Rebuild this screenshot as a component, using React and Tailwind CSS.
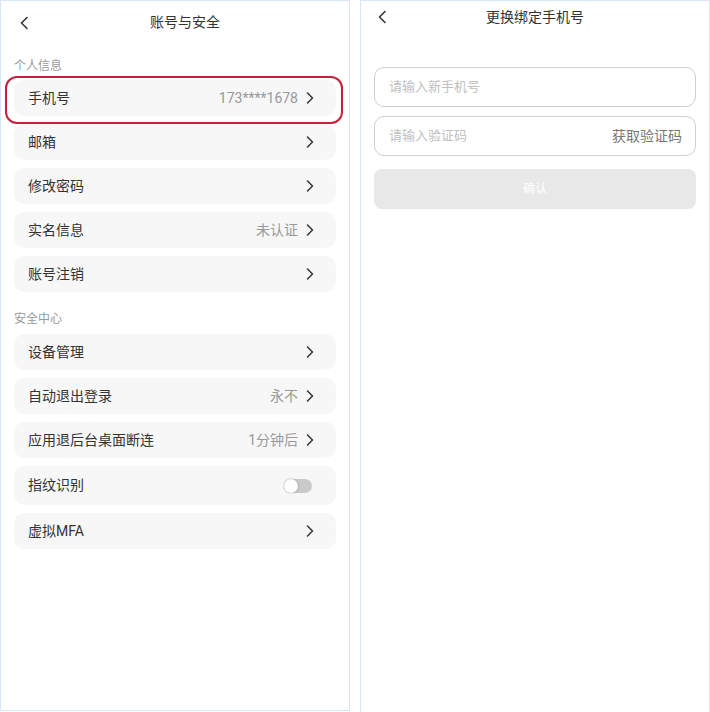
import React from 'react';

const Chevron = () => (
  <svg width="8" height="12" viewBox="0 0 8 12" className="ml-[8px] shrink-0">
    <polyline points="1.5,1 6.5,6 1.5,11" fill="none" stroke="#333" strokeWidth="1.5" strokeLinecap="round" strokeLinejoin="round" />
  </svg>
);

const Back = () => (
  <svg width="10" height="14" viewBox="0 0 10 14">
    <polyline points="8,1.5 2.5,7 8,12.5" fill="none" stroke="#333" strokeWidth="1.6" strokeLinecap="round" strokeLinejoin="round" />
  </svg>
);

const Toggle = () => (
  <div className="relative w-[28px] h-[14px] rounded-full bg-[#c9c9c9] mr-[2px]">
    <div className="absolute left-0 top-0 w-[14px] h-[14px] rounded-full bg-white shadow-[0_0_2px_rgba(0,0,0,0.35)]" />
  </div>
);

const Row = ({ label, value, toggle, tall, highlight }) => (
  <div className={`relative flex items-center bg-[#f7f7f7] rounded-[10px] pl-[14px] pr-[22px] ${tall ? 'h-[39px]' : 'h-[36px]'}`}>
    <span className="flex-1 text-[14px] text-[#333]">{label}</span>
    {value && <span className="text-[14px] text-[#999]">{value}</span>}
    {toggle ? <Toggle /> : <Chevron />}
    {highlight && (
      <div className="absolute top-[-4px] bottom-[-8px] left-[-9px] right-[-7px] border-2 border-[#c8203c] rounded-[12px]" />
    )}
  </div>
);

const SectionLabel = ({ children, className }) => (
  <div className={`text-[12px] leading-[16px] text-[#999] ${className}`}>{children}</div>
);

const AccountSecurity = () => (
  <div className="w-[350px] h-[711px] border border-[#d9e5f7] px-[13px]">
    <div className="relative h-[43px] flex items-center justify-center pl-[20px]">
      <div className="absolute left-[5px] top-[15px]">
        <Back />
      </div>
      <span className="text-[14px] text-[#333]">账号与安全</span>
    </div>
    <SectionLabel className="mt-[14px] mb-[6px]">个人信息</SectionLabel>
    <div className="flex flex-col gap-[8px]">
      <Row label="手机号" value="173****1678" highlight />
      <Row label="邮箱" />
      <Row label="修改密码" />
      <Row label="实名信息" value="未认证" />
      <Row label="账号注销" />
    </div>
    <SectionLabel className="mt-[19px] mb-[7px]">安全中心</SectionLabel>
    <div className="flex flex-col gap-[8px]">
      <Row label="设备管理" />
      <Row label="自动退出登录" value="永不" />
      <Row label="应用退后台桌面断连" value="1分钟后" />
      <Row label="指纹识别" toggle tall />
      <Row label="虚拟MFA" />
    </div>
  </div>
);

const ChangePhone = () => (
  <div className="w-[350px] h-[713px] border border-[#d9e5f7] px-[13px]">
    <div className="relative h-[33px] flex items-center justify-center">
      <div className="absolute left-[3px] top-[9px]">
        <Back />
      </div>
      <span className="text-[14px] text-[#333]">更换绑定手机号</span>
    </div>
    <div className="mt-[33px] flex flex-col">
      <div className="h-[40px] flex items-center border border-[#cfcfcf] rounded-[10px] px-[14px]">
        <span className="text-[13px] text-[#c0c0c0]">请输入新手机号</span>
      </div>
      <div className="mt-[9px] h-[40px] flex items-center justify-between border border-[#cfcfcf] rounded-[10px] pl-[14px] pr-[13px]">
        <span className="text-[13px] text-[#c0c0c0]">请输入验证码</span>
        <span className="text-[14px] text-[#777]">获取验证码</span>
      </div>
      <div className="mt-[13px] h-[40px] flex items-center justify-center rounded-[8px] bg-[#e8e8e8]">
        <span className="text-[12px] text-white">确认</span>
      </div>
    </div>
  </div>
);

export default function App() {
  return (
    <div
      className="flex gap-[10px] bg-white w-[710px] h-[712px] overflow-hidden"
      style={{ fontFamily: 'Roboto, "Noto Sans CJK SC", sans-serif' }}
    >
      <AccountSecurity />
      <ChangePhone />
    </div>
  );
}
